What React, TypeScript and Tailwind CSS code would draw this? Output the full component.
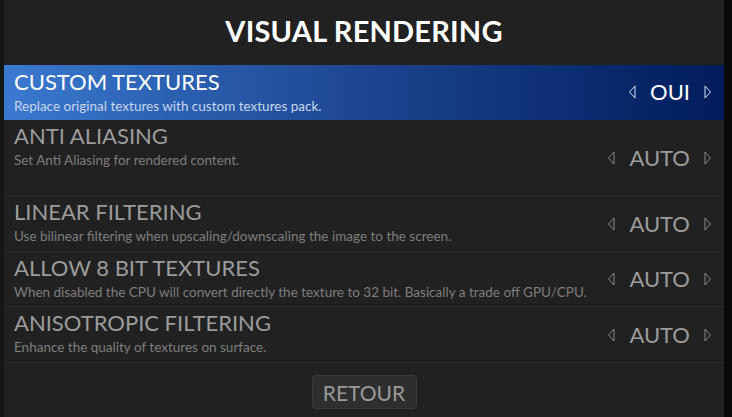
const rows = [
  { title: "CUSTOM TEXTURES", desc: "Replace original textures with custom textures pack.", value: "OUI", h: "h-[55px]", selected: true },
  { title: "ANTI ALIASING", desc: "Set Anti Aliasing for rendered content.", value: "AUTO", h: "h-[76px]", selected: false },
  { title: "LINEAR FILTERING", desc: "Use bilinear filtering when upscaling/downscaling the image to the screen.", value: "AUTO", h: "h-[56px]", selected: false },
  { title: "ALLOW 8 BIT TEXTURES", desc: "When disabled the CPU will convert directly the texture to 32 bit. Basically a trade off GPU/CPU.", value: "AUTO", h: "h-[55px]", selected: false },
  { title: "ANISOTROPIC FILTERING", desc: "Enhance the quality of textures on surface.", value: "AUTO", h: "h-[56px]", selected: false },
]

function Arrow({ dir, color }: { dir: "left" | "right"; color: string }) {
  return (
    <svg width="8" height="16" viewBox="0 0 8 16" fill="none" stroke={color} strokeWidth={1}>
      {dir === "left" ? <path d="M7 2 L1.5 8 L7 14 Z" /> : <path d="M1 2 L6.5 8 L1 14 Z" />}
    </svg>
  )
}

export default function App() {
  return (
    <div className="flex w-[732px] h-[417px] bg-[#0c0c0c] overflow-hidden" style={{ fontFamily: "Lato, 'Open Sans', sans-serif" }}>
      <div className="w-[4px] bg-[#141618]" />
      <div className="w-[720px] h-full bg-[#212121] flex flex-col">
        {/* Header */}
        <div className="h-[65px] flex items-center justify-center">
          <h1 className="text-[29px] font-bold text-white tracking-[0.2px] leading-none mt-[-4px]">VISUAL RENDERING</h1>
        </div>

        {/* Options */}
        <div className="flex flex-col">
          {rows.map((r) => (
            <div
              key={r.title}
              className={`${r.h} flex items-center justify-between pl-[10px] pr-[12px] border-b ${
                r.selected
                  ? "bg-gradient-to-r from-[#3a7ad0] via-[#1d4590] to-[#021c5c] border-transparent"
                  : "border-[#2b2b2b]"
              }`}
            >
              <div className={`flex flex-col self-start ${r.selected ? "pt-[2px]" : "pt-[1px]"}`}>
                <div className={`text-[22px] leading-[30px] ${r.selected ? "text-white" : "text-[#9c9c9c]"}`}>{r.title}</div>
                <div className={`text-[13.5px] leading-[18px] ${r.selected ? "text-[#c9d6ee]" : "text-[#7e7e7e]"}`}>{r.desc}</div>
              </div>
              <div className={`flex items-center gap-[14px] ${r.selected ? "text-white" : "text-[#9c9c9c]"}`}>
                <Arrow dir="left" color={r.selected ? "#d8e0f0" : "#8a8a8a"} />
                <span className="text-[22px] leading-none">{r.value}</span>
                <Arrow dir="right" color={r.selected ? "#d8e0f0" : "#8a8a8a"} />
              </div>
            </div>
          ))}
        </div>

        {/* Footer */}
        <div className="flex justify-center pt-[12px]">
          <button className="w-[105px] h-[34px] rounded-[4px] bg-[#2e2e2e] border border-[#3c3c3c] text-[#9a9a9a] text-[21px] leading-none">
            RETOUR
          </button>
        </div>
      </div>
      <div className="w-[8px] bg-[#0a0a0a]" />
    </div>
  )
}
